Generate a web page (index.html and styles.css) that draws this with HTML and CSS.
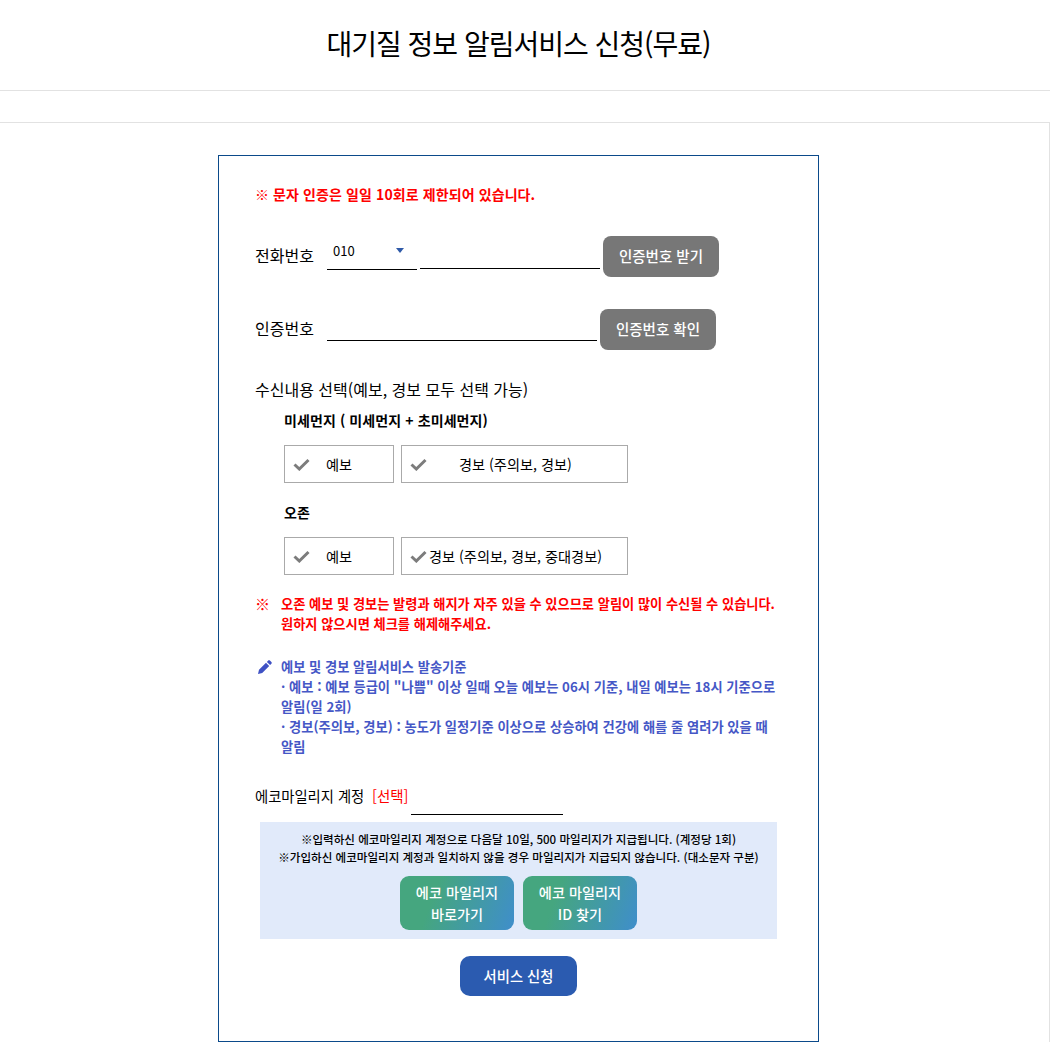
FILE: index.html
```html
<!DOCTYPE html>
<html lang="ko">
<head>
<meta charset="utf-8">
<title>대기질 정보 알림서비스 신청(무료)</title>
<link rel="stylesheet" href="styles.css">
</head>
<body>
<header class="top"><h1>대기질 정보 알림서비스 신청(무료)</h1></header>
<div class="strip"></div>
<main class="wrap">
  <form class="panel">
    <p class="limit">※ 문자 인증은 일일 10회로 제한되어 있습니다.</p>
    <div class="row phone">
      <label class="lab">전화번호</label>
      <div class="select"><span>010</span><svg class="caret" width="8" height="5" viewBox="0 0 8 5"><path d="M0 0h8L4 5z"/></svg></div>
      <div class="line w180"></div>
      <button type="button" class="gray">인증번호 받기</button>
    </div>
    <div class="row code">
      <label class="lab">인증번호</label>
      <div class="line w270"></div>
      <button type="button" class="gray">인증번호 확인</button>
    </div>
    <p class="recv">수신내용 선택(예보, 경보 모두 선택 가능)</p>
    <div class="group">
      <h3 class="gt first">미세먼지 ( 미세먼지 + 초미세먼지)</h3>
      <div class="checks">
        <div class="chk small"><svg class="tick" width="17" height="13" viewBox="0 0 17 13"><path d="M1.500 6.500 6.300 11 15.500 2" /></svg><span class="t1">예보</span></div>
        <div class="chk big"><svg class="tick" width="17" height="13" viewBox="0 0 17 13"><path d="M1.500 6.500 6.300 11 15.500 2" /></svg><span class="t2">경보 (주의보, 경보)</span></div>
      </div>
      <h3 class="gt second">오존</h3>
      <div class="checks">
        <div class="chk small"><svg class="tick" width="17" height="13" viewBox="0 0 17 13"><path d="M1.500 6.500 6.300 11 15.500 2" /></svg><span class="t1">예보</span></div>
        <div class="chk big"><svg class="tick" width="17" height="13" viewBox="0 0 17 13"><path d="M1.500 6.500 6.300 11 15.500 2" /></svg><span class="t3">경보 (주의보, 경보, 중대경보)</span></div>
      </div>
    </div>
    <div class="warn">
      <span class="mark">※</span>
      <p>오존 예보 및 경보는 발령과 해지가 자주 있을 수 있으므로 알림이 많이 수신될 수 있습니다.<br>원하지 않으시면 체크를 해제해주세요.</p>
    </div>
    <div class="info">
      <svg class="pen" width="14" height="14" viewBox="0 0 14 14"><path d="M10.200.6c.5-.5 1.200-.5 1.700 0l1.500 1.500c.5.5.5 1.200 0 1.700l-1.300 1.300-3.200-3.200zM8 2.800 11.200 6l-7 7L0 14l1-4.200z"/></svg>
      <p>예보 및 경보 알림서비스 발송기준<br><span class="item">· 예보 : 예보 등급이 "나쁨" 이상 일때 오늘 예보는 06시 기준, 내일 예보는 18시 기준으로 알림(일 2회)</span><br><span class="item">· 경보(주의보, 경보) : 농도가 일정기준 이상으로 상승하여 건강에 해를 줄 염려가 있을 때 알림</span></p>
    </div>
    <div class="eco">
      <label class="lab2">에코마일리지 계정</label>
      <span class="opt">[선택]</span>
      <div class="line w152"></div>
    </div>
    <section class="box">
      <p>※입력하신 에코마일리지 계정으로 다음달 10일, 500 마일리지가 지급됩니다. (계정당 1회)</p>
      <p>※가입하신 에코마일리지 계정과 일치하지 않을 경우 마일리지가 지급되지 않습니다. (대소문자 구분)</p>
      <div class="links">
        <a class="grad">에코 마일리지<br>바로가기</a>
        <a class="grad">에코 마일리지<br>ID 찾기</a>
      </div>
    </section>
    <div class="submit"><button type="button" class="apply">서비스 신청</button></div>
  </form>
</main>
</body>
</html>
```

FILE: styles.css
```css
* { box-sizing: border-box; }
html, body { margin: 0; padding: 0; }
body {
  background: #fff;
  color: #000;
  font-family: "Noto Sans CJK KR", "Noto Sans", sans-serif;
  height: 1042px;
  overflow: hidden;
}
p, h1, h3 { margin: 0; }
.top {
  height: 91px;
  border-bottom: 1px solid #e2e2e2;
  display: flex;
  justify-content: center;
  padding: 22px 13px 0 0;
}
.top h1 { font-size: 28px; font-weight: 400; line-height: 42px; letter-spacing: -1px; }
.strip { height: 31px; }
.wrap {
  border-top: 1px solid #e2e2e2;
  border-right: 1px solid #e2e2e2;
  padding: 32px 12px 0 0;
  display: flex;
  justify-content: center;
  height: 920px;
}
.panel {
  width: 601px;
  height: 887px;
  border: 1px solid #0b4a8a;
  padding: 27px 0 0 36px;
  flex: none;
}
.limit { color: #f00; font-size: 14px; font-weight: 700; line-height: 22px; letter-spacing: .1px; }
.row { display: flex; align-items: flex-end; }
.lab { font-size: 16px; line-height: 22px; width: 72px; flex: none; padding-bottom: 3px; }
.phone { margin-top: 31px; height: 41px; }
.phone .lab { align-self: center; }
.select {
  width: 90px; height: 33px;
  border-bottom: 1px solid #000;
  margin-bottom: 7px;
  position: relative;
  font-size: 13px;
  line-height: 18px;
  padding: 5px 0 0 6px;
}
.caret { position: absolute; right: 13px; top: 11px; fill: #2f5aa8; }
.line { border-bottom: 1px solid #000; }
.w180 { width: 180px; margin: 0 3px 8px; }
.w270 { width: 270px; margin: 0 3px 9px 0; }
.w152 { width: 152px; height: 30px; margin-left: 3px; }
.gray {
  border: 0; border-radius: 8px;
  background: #777;
  color: #fff;
  font: 500 14.5px/20px "Noto Sans CJK KR", sans-serif;
  width: 116px; height: 41px;
  padding: 0 0 2px;
}
.code { margin-top: 32px; height: 41px; }
.code .lab { align-self: center; }
.recv { font-size: 16px; line-height: 22px; margin-top: 28px; }
.group { padding-left: 29px; }
.gt { font-size: 14px; font-weight: 700; line-height: 20px; letter-spacing: .1px; }
.first { margin-top: 10px; }
.second { margin-top: 19px; }
.checks { display: flex; gap: 7px; margin-top: 15px; }
.chk {
  height: 38px;
  border: 1px solid #aaa;
  display: flex;
  align-items: center;
  font-size: 14.2px;
  padding-left: 8px;
}
.small { width: 110px; }
.big { width: 227px; }
.tick { fill: none; stroke: #7c7c7c; stroke-width: 3; flex: none; }
.t1 { margin-left: 16px; }
.t2 { margin-left: 32px; }
.t3 { margin-left: 2px; }
.warn { display: flex; margin-top: 19px; color: #f00; font-size: 13.22px; font-weight: 700; line-height: 20px; }
.mark { width: 26px; flex: none; font-weight: 400; font-size: 15px; }
.warn p { width: 510px; }
.info { display: flex; margin-top: 23px; color: #4557c6; font-size: 13.25px; font-weight: 700; line-height: 20px; word-break: keep-all; }
.item { letter-spacing: .02px; }
.pen { flex: none; margin: 3px 9px 0 3px; fill: #3f51c4; }
.info p { width: 500px; }
.eco { display: flex; align-items: flex-start; margin-top: 28px; font-size: 15px; line-height: 22px; height: 30px; }
.lab2 { width: 117px; flex: none; font-size: 14.3px; }
.opt { color: #f00; width: 36px; flex: none; font-size: 14.5px; white-space: nowrap; }
.box {
  width: 517px; height: 117px;
  margin-left: 5px; margin-top: 7px;
  background: #e1eafa;
  padding-top: 8px;
  text-align: center;
  font-size: 11.55px;
  font-weight: 500;
  line-height: 18px;
}
.links { display: flex; justify-content: center; gap: 9px; margin-top: 10px; }
.grad {
  width: 114px; height: 54px;
  border-radius: 9px;
  background: linear-gradient(110deg, #45a67f 30%, #3f8ecb);
  color: #fff;
  font-size: 14.2px;
  font-weight: 500;
  line-height: 22px;
  padding-top: 5px;
}
.submit { display: flex; justify-content: center; width: 527px; margin-top: 17px; }
.apply {
  width: 117px; height: 40px;
  border: 0; border-radius: 10px;
  background: #2b5bb0;
  color: #fff;
  font: 500 14.3px/20px "Noto Sans CJK KR", sans-serif;
  padding: 0;
}
```
